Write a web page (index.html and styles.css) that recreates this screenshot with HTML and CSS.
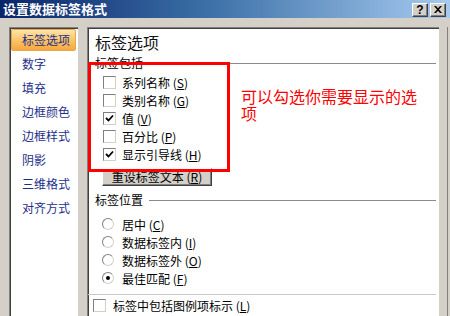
FILE: index.html
```html
<!DOCTYPE html>
<html lang="zh-CN">
<head>
<meta charset="utf-8">
<title>设置数据标签格式</title>
<link rel="stylesheet" href="styles.css">
</head>
<body>
<div class="window">
  <div class="titlebar">
    <span class="title">设置数据标签格式</span>
    <div class="tbtns">
      <span class="tbtn help">?</span>
      <span class="tbtn close"><svg width="8" height="7" viewBox="0 0 8 7"><path d="M0 0h2l2 2.2L6 0h2L5 3.5 8 7H6L4 4.8 2 7H0l3-3.5z" fill="#000"/></svg></span>
    </div>
  </div>
  <div class="main">
    <ul class="nav">
      <li class="item selected">标签选项</li>
      <li class="item">数字</li>
      <li class="item">填充</li>
      <li class="item">边框颜色</li>
      <li class="item">边框样式</li>
      <li class="item">阴影</li>
      <li class="item">三维格式</li>
      <li class="item">对齐方式</li>
    </ul>
    <div class="panel">
      <div class="heading">标签选项</div>
      <div class="group-label g1"><span>标签包括</span><i class="rule"></i></div>
      <div class="opts">
        <div class="row"><span class="cb"></span><span>系列名称 (<u>S</u>)</span></div>
        <div class="row"><span class="cb"></span><span>类别名称 (<u>G</u>)</span></div>
        <div class="row"><span class="cb checked"><svg width="9" height="9" viewBox="0 0 9 9"><path d="M1 4l2.5 2.5L8 1.5" fill="none" stroke="#000" stroke-width="1.8"/></svg></span><span>值 (<u>V</u>)</span></div>
        <div class="row"><span class="cb"></span><span>百分比 (<u>P</u>)</span></div>
        <div class="row"><span class="cb checked"><svg width="9" height="9" viewBox="0 0 9 9"><path d="M1 4l2.5 2.5L8 1.5" fill="none" stroke="#000" stroke-width="1.8"/></svg></span><span>显示引导线 (<u>H</u>)</span></div>
      </div>
      <div class="btn">重设标签文本 (<u>R</u>)</div>
      <div class="group-label g2"><span>标签位置</span><i class="rule"></i></div>
      <div class="opts radios">
        <div class="row"><span class="rb"></span><span>居中 (<u>C</u>)</span></div>
        <div class="row"><span class="rb"></span><span>数据标签内 (<u>I</u>)</span></div>
        <div class="row"><span class="rb"></span><span>数据标签外 (<u>O</u>)</span></div>
        <div class="row"><span class="rb on"></span><span>最佳匹配 (<u>F</u>)</span></div>
      </div>
      <div class="sep"></div>
      <div class="row bottom"><span class="cb"></span><span>标签中包括图例项标示 (<u>L</u>)</span></div>
    </div>
    <div class="edge"></div>
  </div>
  <div class="annot-box"></div>
  <div class="annot-text">可以勾选你需要显示的选项</div>
</div>
</body>
</html>
```
FILE: styles.css
```css
* { box-sizing: border-box; }
html, body { margin: 0; padding: 0; }
body {
  width: 450px;
  height: 316px;
  overflow: hidden;
  background: #d4d0c8;
  font-family: "Noto Sans CJK SC", "Noto Sans", sans-serif;
  font-size: 12px;
  color: #000;
}
.window {
  position: relative;
  width: 450px;
  height: 316px;
  overflow: hidden;
}
.titlebar {
  height: 18px;
  background: linear-gradient(to right, #0a246a 0%, #3a6ea5 45%, #a6caf0 100%);
  display: flex;
  align-items: center;
  justify-content: space-between;
  padding: 0 4px 0 3px;
}
.title {
  color: #fff;
  font-weight: bold;
  font-size: 13px;
  line-height: 18px;
  letter-spacing: 0;
}
.tbtns {
  display: flex;
  gap: 2px;
  padding-top: 1px;
}
.tbtn {
  width: 16px;
  height: 14px;
  background: #d4d0c8;
  border: 1px solid;
  border-color: #fff #404040 #404040 #fff;
  box-shadow: inset -1px -1px #808080;
  display: flex;
  align-items: center;
  justify-content: center;
  font-family: "Liberation Sans", sans-serif;
  font-weight: bold;
  font-size: 12px;
  line-height: 12px;
}
.main {
  display: flex;
  padding: 9px 0 0 9px;
  height: 298px;
}
.nav {
  list-style: none;
  margin: 0;
  padding: 1px 2px 0 1px;
  width: 69px;
  height: 100%;
  background: #fff;
  border-top: 1px solid #808080;
  border-left: 1px solid #808080;
  box-shadow: inset 1px 1px #404040;
}
.item {
  height: 22px;
  margin-bottom: 2px;
  padding-left: 11px;
  line-height: 22px;
  color: #1e2f8a;
  white-space: nowrap;
}
.item.selected {
  background: linear-gradient(to bottom, #fde4a8 0%, #fbc870 45%, #f6a83e 100%);
  border: 1px solid #e7a84c;
  border-radius: 2px;
  padding-left: 10px;
  line-height: 20px;
}
.panel {
  margin-left: 9px;
  width: 352px;
  height: 100%;
  background: #fff;
  border-top: 1px solid #808080;
  border-left: 1px solid #808080;
  box-shadow: inset 1px 1px #404040;
  padding: 0 3px 0 0;
  display: flex;
  flex-direction: column;
}
.heading {
  margin-top: 5px;
  padding-left: 7px;
  font-size: 16px;
  line-height: 18px;
  height: 18px;
  color: #111;
}
.group-label {
  display: flex;
  align-items: center;
  height: 12px;
  line-height: 12px;
  padding-left: 7px;
  gap: 6px;
}
.group-label .rule {
  flex: 1;
  height: 1px;
  background: #8a8a8a;
}
.g1 { margin-top: 6px; }
.g2 { margin-top: 8px; }
.opts {
  margin-top: 4px;
  padding-left: 15px;
}
.radios {
  margin-top: 9px;
  padding-left: 14px;
}
.row {
  height: 18px;
  display: flex;
  align-items: center;
  gap: 6px;
  white-space: nowrap;
}
.radios .row { gap: 8px; }
.cb {
  width: 13px;
  height: 13px;
  background: #fff;
  border: 1px solid;
  border-color: #808080 #d4d0c8 #d4d0c8 #808080;
  display: flex;
  align-items: center;
  justify-content: center;
  flex: none;
}
.rb {
  width: 12px;
  height: 12px;
  border-radius: 50%;
  background: #fff;
  border: 1px solid;
  border-color: #808080 #d4d0c8 #d4d0c8 #808080;
  flex: none;
  display: flex;
  align-items: center;
  justify-content: center;
}
.rb.on::after {
  content: "";
  width: 4px;
  height: 4px;
  border-radius: 50%;
  background: #000;
}
.btn {
  margin: 5px 0 0 14px;
  width: 110px;
  height: 18px;
  background: #d4d0c8;
  border: 1px solid;
  border-color: #fff #404040 #404040 #fff;
  box-shadow: inset -1px -1px #808080;
  text-align: center;
  line-height: 16px;
}
.sep {
  margin-top: 7px;
  height: 1px;
  background: #c8c8c8;
}
.bottom {
  margin-top: 1px;
  padding-left: 5px;
  gap: 7px;
}
.edge {
  margin-left: 8px;
  width: 3px;
  height: 100%;
  border-left: 1px solid #808080;
  background: #d4d0c8;
}
u { text-decoration: underline; text-underline-offset: 1px; }
.annot-box {
  position: absolute;
  left: 88px;
  top: 62px;
  width: 142px;
  height: 110px;
  border: 3px solid #ff0000;
}
.annot-text {
  position: absolute;
  left: 241px;
  top: 88px;
  width: 182px;
  font-size: 16px;
  line-height: 17px;
  color: #ff0000;
}
```
